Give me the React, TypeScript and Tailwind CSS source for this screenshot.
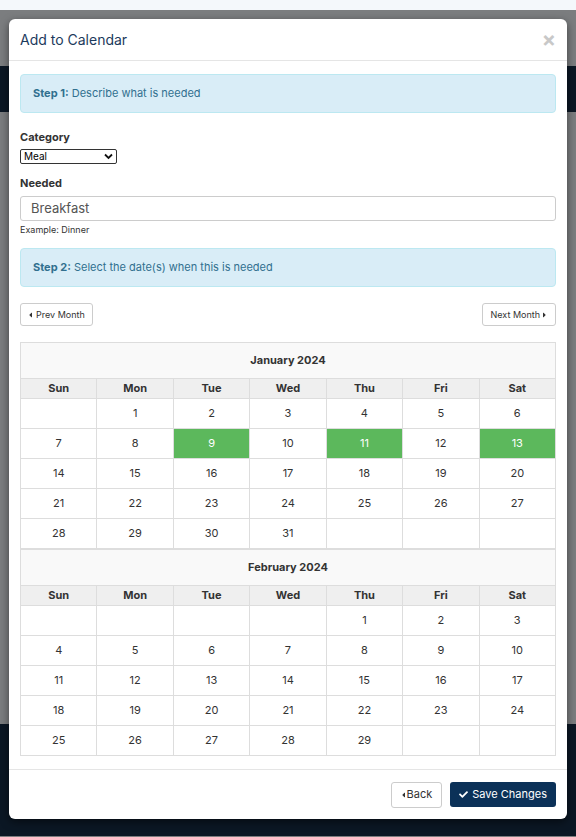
import React from "react";
import { FaCaretLeft, FaCaretRight, FaCheck } from "react-icons/fa";

type Month = { title: string; start: number; days: number; selected: number[] };

const months: Month[] = [
  { title: "January 2024", start: 1, days: 31, selected: [9, 11, 13] },
  { title: "February 2024", start: 4, days: 29, selected: [] },
];

const dayNames = ["Sun", "Mon", "Tue", "Wed", "Thu", "Fri", "Sat"];

function weeks(m: Month): (number | null)[][] {
  const cells: (number | null)[] = [];
  for (let i = 0; i < m.start; i++) cells.push(null);
  for (let d = 1; d <= m.days; d++) cells.push(d);
  while (cells.length % 7 !== 0) cells.push(null);
  const rows: (number | null)[][] = [];
  for (let i = 0; i < cells.length; i += 7) rows.push(cells.slice(i, i + 7));
  return rows;
}

function MonthTable({ m }: { m: Month }) {
  return (
    <table className="w-full table-fixed border-collapse text-[11px] text-[#333]">
      <thead>
        <tr>
          <th colSpan={7} className="h-[36px] border border-[#ddd] bg-[#f9f9f9] font-bold">
            {m.title}
          </th>
        </tr>
        <tr>
          {dayNames.map((d) => (
            <th key={d} className="h-[20px] border border-[#ddd] bg-[#efefef] font-bold">
              {d}
            </th>
          ))}
        </tr>
      </thead>
      <tbody>
        {weeks(m).map((row, i) => (
          <tr key={i}>
            {row.map((d, j) => {
              const sel = d !== null && m.selected.includes(d);
              return (
                <td
                  key={j}
                  className={
                    sel
                      ? "h-[30px] border border-[#ddd] bg-[#5cb85c] text-center text-white"
                      : "h-[30px] border border-[#ddd] text-center"
                  }
                >
                  {d ?? ""}
                </td>
              );
            })}
          </tr>
        ))}
      </tbody>
    </table>
  );
}

export default function App() {
  return (
    <div className="relative h-[837px] w-[576px] overflow-hidden font-['Inter',sans-serif]">
      <div className="flex h-full flex-col">
        <div className="h-[10px] bg-[#f4f8fb]" />
        <div className="h-[56px] bg-[#7b7d7f]" />
        <div className="h-[46px] bg-[#0b1724]" />
        <div className="h-[612px] bg-[#7b7d7f]" />
        <div className="h-[112px] bg-[#0b1724]" />
        <div className="h-[1px] bg-[#7b7d7f]" />
      </div>

      <div className="absolute left-[9px] top-[19px] w-[558px] rounded-[6px] bg-white shadow-[0_3px_9px_rgba(0,0,0,0.5)]">
        <div className="flex h-[42px] items-center justify-between border-b border-[#e5e5e5] pl-[11px] pr-[11px]">
          <h4 className="text-[14px] font-normal text-[#1c3a5c]">Add to Calendar</h4>
          <span className="text-[21px] font-bold leading-none text-[#c8c8c8]">×</span>
        </div>

        <div className="px-[11px] pt-[13px] pb-[13px]">
          <div className="flex h-[39px] items-center rounded-[4px] border border-[#bce8f1] bg-[#d9edf7] px-[12px] text-[11px] text-[#31708f]">
            <span className="font-bold">Step 1:</span>&nbsp;Describe what is needed
          </div>

          <div className="mt-[17px] text-[11px] font-bold leading-[15px] text-[#333]">Category</div>
          <div className="relative mt-[4px] h-[15px] w-[97px] rounded-[2px] border border-[#333] bg-white">
            <span className="absolute left-[3px] top-0 text-[10px] leading-[13px] text-black">Meal</span>
            <svg
              className="absolute right-[3px] top-[3px]"
              width="9"
              height="7"
              viewBox="0 0 9 7"
            >
              <path d="M1 1.5 L4.5 5 L8 1.5" stroke="#111" strokeWidth="1.8" fill="none" />
            </svg>
          </div>

          <div className="mt-[12px] text-[11px] font-bold leading-[15px] text-[#333]">Needed</div>
          <div className="mt-[5px] flex h-[25px] items-center rounded-[3px] border border-[#ccc] px-[10px] text-[13px] text-[#555]">
            Breakfast
          </div>
          <div className="mt-[3px] text-[9px] leading-[12px] text-[#333]">Example: Dinner</div>

          <div className="mt-[12px] flex h-[39px] items-center rounded-[4px] border border-[#bce8f1] bg-[#d9edf7] px-[12px] text-[11px] text-[#31708f]">
            <span className="font-bold">Step 2:</span>&nbsp;Select the date(s) when this is needed
          </div>

          <div className="mt-[16px] flex justify-between">
            <div className="flex h-[23px] items-center rounded-[3px] border border-[#ccc] px-[7px] text-[9px] text-[#333]">
              <FaCaretLeft className="h-[8px] w-[5px]" />
              <span className="ml-[3px]">Prev Month</span>
            </div>
            <div className="flex h-[23px] items-center rounded-[3px] border border-[#ccc] px-[8px] text-[9px] text-[#333]">
              <span className="mr-[2px]">Next Month</span>
              <FaCaretRight className="h-[8px] w-[5px]" />
            </div>
          </div>

          <div className="mt-[16px]">
            <MonthTable m={months[0]} />
            <MonthTable m={months[1]} />
          </div>
        </div>

        <div className="flex h-[50px] items-center justify-end gap-[8px] border-t border-[#e5e5e5] px-[11px]">
          <div className="flex h-[26px] items-center rounded-[3px] border border-[#ccc] px-[9px] text-[11px] text-[#333]">
            <FaCaretLeft className="mr-[1px] h-[8px] w-[5px]" />
            <span>Back</span>
          </div>
          <div className="flex h-[25px] items-center rounded-[3px] bg-[#0b3158] px-[9px] text-[11px] text-white">
            <FaCheck className="mr-[4px] h-[9px] w-[9px]" />
            <span>Save Changes</span>
          </div>
        </div>
      </div>
    </div>
  );
}
